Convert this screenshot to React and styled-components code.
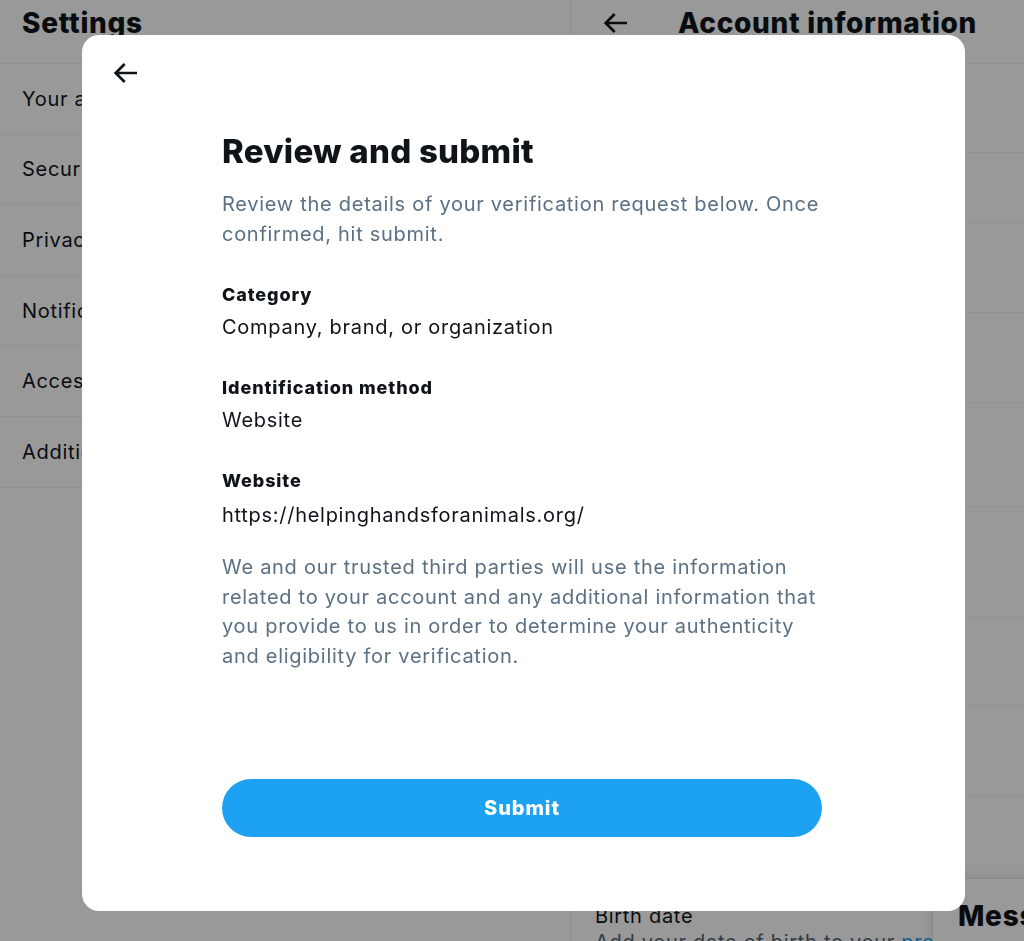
import React from "react";
import styled, { createGlobalStyle } from "styled-components";

const GlobalStyle = createGlobalStyle`
  *, *::before, *::after { box-sizing: border-box; }
  html, body { margin: 0; padding: 0; background: #ffffff; }
  body {
    font-family: Inter, "Noto Sans", "Liberation Sans", sans-serif;
    color: #0f1419;
    -webkit-font-smoothing: antialiased;
  }
`;

const Page = styled.div`
  position: relative;
  width: 1024px;
  height: 941px;
  overflow: hidden;
  display: flex;
  background: #ffffff;
`;

const SettingsColumn = styled.section`
  width: 571px;
  flex-shrink: 0;
  border-right: 1px solid #eff3f4;
  display: flex;
  flex-direction: column;
`;

const DetailColumn = styled.section`
  flex: 1;
  display: flex;
  flex-direction: column;
`;

const ColumnHeader = styled.header`
  height: 64px;
  flex-shrink: 0;
  display: flex;
  align-items: flex-start;
  padding: 6px 0 0 ${(p) => p.$inset || 22}px;
  border-bottom: 1px solid #eff3f4;
`;

const HeaderTitle = styled.h2`
  margin: 0;
  font-size: 28px;
  line-height: 34px;
  font-weight: 800;
  letter-spacing: 0.7px;
  color: #0f1419;
  white-space: nowrap;
`;

const HeaderBack = styled.span`
  width: 32px;
  height: 32px;
  margin: 1px 47px 0 0;
  display: flex;
  color: #0f1419;
`;

const SettingsRow = styled.div`
  height: 70.6px;
  flex-shrink: 0;
  display: flex;
  align-items: center;
  justify-content: space-between;
  padding: 0 20px 0 22px;
  border-bottom: 1px solid #eff3f4;
  font-size: 20px;
  letter-spacing: 0.7px;
  color: #0f1419;
  white-space: nowrap;
`;

const Chevron = styled.span`
  display: flex;
  color: #536471;
`;

const InfoRow = styled.div`
  height: ${(p) => p.$h}px;
  flex-shrink: 0;
  display: flex;
  flex-direction: column;
  justify-content: flex-start;
  padding: 9px 20px 0 24px;
  border-bottom: ${(p) => (p.$last ? "none" : "1px solid #eff3f4")};
  white-space: nowrap;
`;

const InfoLabel = styled.div`
  font-size: 20px;
  line-height: 26px;
  letter-spacing: 0.7px;
  color: #0f1419;
`;

const InfoValue = styled.div`
  font-size: 20px;
  line-height: 26px;
  letter-spacing: 0.7px;
  color: #536471;
`;

const InfoLink = styled.span`
  color: #1d9bf0;
`;

const MessagesDrawer = styled.aside`
  position: absolute;
  left: 933px;
  top: 879px;
  width: 400px;
  height: 120px;
  background: #ffffff;
  border-top-left-radius: 16px;
  box-shadow: rgba(101, 119, 134, 0.2) 0 0 15px, rgba(101, 119, 134, 0.15) 0 0 3px 1px;
  padding: 20px 0 0 25px;
`;

const DrawerTitle = styled.div`
  font-size: 28px;
  line-height: 34px;
  font-weight: 800;
  letter-spacing: 0.7px;
  color: #0f1419;
  white-space: nowrap;
`;

const Overlay = styled.div`
  position: fixed;
  inset: 0;
  background: rgba(0, 0, 0, 0.4);
  display: flex;
  align-items: flex-start;
  padding: 35px 0 0 82px;
`;

const Modal = styled.div`
  width: 883px;
  height: 876px;
  background: #ffffff;
  border-radius: 17px;
  display: flex;
  flex-direction: column;
  overflow: hidden;
`;

const ModalHeader = styled.div`
  height: 76px;
  flex-shrink: 0;
  display: flex;
  align-items: center;
  padding-left: 27px;
`;

const BackButton = styled.button`
  width: 32px;
  height: 32px;
  padding: 0;
  border: none;
  background: transparent;
  color: #0f1419;
  display: flex;
  cursor: pointer;
`;

const ModalBody = styled.div`
  flex: 1;
  display: flex;
  flex-direction: column;
  padding: 21px 0 0 140px;
`;

const Content = styled.div`
  width: 600px;
  display: flex;
  flex-direction: column;
`;

const Title = styled.h1`
  margin: 0;
  font-size: 33px;
  line-height: 38px;
  font-weight: 800;
  letter-spacing: 0.25px;
  color: #0f1419;
`;

const Lead = styled.p`
  margin: ${(p) => p.$mt || 0}px 0 0;
  font-size: 20px;
  line-height: 29.5px;
  letter-spacing: 0.72px;
  color: #5b7083;
`;

const Field = styled.div`
  margin-top: ${(p) => p.$mt}px;
  display: flex;
  flex-direction: column;
`;

const FieldLabel = styled.div`
  font-size: 18px;
  line-height: 24px;
  font-weight: 800;
  letter-spacing: 0.9px;
  color: #0f1419;
`;

const FieldValue = styled.div`
  margin-top: ${(p) => p.$gap}px;
  font-size: 20px;
  line-height: 30px;
  letter-spacing: 0.72px;
  color: #0f1419;
`;

const ModalFooter = styled.div`
  flex-shrink: 0;
  padding: 0 0 74px 140px;
`;

const SubmitButton = styled.button`
  width: 600px;
  height: 58px;
  border: none;
  border-radius: 9999px;
  background: #1da1f2;
  color: #ffffff;
  font-family: Inter, "Noto Sans", "Liberation Sans", sans-serif;
  font-size: 20px;
  font-weight: 800;
  letter-spacing: 0.9px;
  cursor: pointer;
`;

const ArrowIcon = ({ size = 32 }) => (
  <svg width={size} height={size} viewBox="0 0 24 24" fill="currentColor" aria-hidden="true">
    <path d="M7.414 13l5.043 5.04-1.414 1.42L3.586 12l7.457-7.46 1.414 1.42L7.414 11H21v2H7.414z" />
  </svg>
);

const ChevronIcon = () => (
  <svg width="24" height="24" viewBox="0 0 24 24" fill="currentColor" aria-hidden="true">
    <path d="M14.586 12L7.543 4.96l1.414-1.42L17.414 12l-8.457 8.46-1.414-1.42L14.586 12z" />
  </svg>
);

const settings = [
  "Your account",
  "Security and account access",
  "Privacy and safety",
  "Notifications",
  "Accessibility, display, and languages",
  "Additional resources",
];

const infoRowHeights = [89, 70, 90, 90, 104, 111, 88, 90, 98];

export default function App() {
  return (
    <>
      <GlobalStyle />
      <Page>
        <SettingsColumn>
          <ColumnHeader>
            <HeaderTitle>Settings</HeaderTitle>
          </ColumnHeader>
          {settings.map((s) => (
            <SettingsRow key={s}>
              <span>{s}</span>
              <Chevron>
                <ChevronIcon />
              </Chevron>
            </SettingsRow>
          ))}
        </SettingsColumn>
        <DetailColumn>
          <ColumnHeader $inset={28}>
            <HeaderBack>
              <ArrowIcon />
            </HeaderBack>
            <HeaderTitle>Account information</HeaderTitle>
          </ColumnHeader>
          {infoRowHeights.map((h, i) => (
            <InfoRow key={i} $h={h} />
          ))}
          <InfoRow $h={100} $last>
            <InfoLabel>Birth date</InfoLabel>
            <InfoValue>
              Add your date of birth to your <InfoLink>profile</InfoLink>
            </InfoValue>
          </InfoRow>
        </DetailColumn>
        <MessagesDrawer>
          <DrawerTitle>Messages</DrawerTitle>
        </MessagesDrawer>
      </Page>
      <Overlay>
        <Modal role="dialog" aria-label="Review and submit">
          <ModalHeader>
            <BackButton aria-label="Back">
              <ArrowIcon />
            </BackButton>
          </ModalHeader>
          <ModalBody>
            <Content>
              <Title>Review and submit</Title>
              <Lead $mt={20}>
                Review the details of your verification request below. Once
                confirmed, hit submit.
              </Lead>
              <Field $mt={34}>
                <FieldLabel>Category</FieldLabel>
                <FieldValue $gap={5}>Company, brand, or organization</FieldValue>
              </Field>
              <Field $mt={34}>
                <FieldLabel>Identification method</FieldLabel>
                <FieldValue $gap={5}>Website</FieldValue>
              </Field>
              <Field $mt={34}>
                <FieldLabel>Website</FieldLabel>
                <FieldValue $gap={7}>https://helpinghandsforanimals.org/</FieldValue>
              </Field>
              <Lead $mt={23}>
                We and our trusted third parties will use the information
                related to your account and any additional information that you
                provide to us in order to determine your authenticity and
                eligibility for verification.
              </Lead>
            </Content>
          </ModalBody>
          <ModalFooter>
            <SubmitButton>Submit</SubmitButton>
          </ModalFooter>
        </Modal>
      </Overlay>
    </>
  );
}
